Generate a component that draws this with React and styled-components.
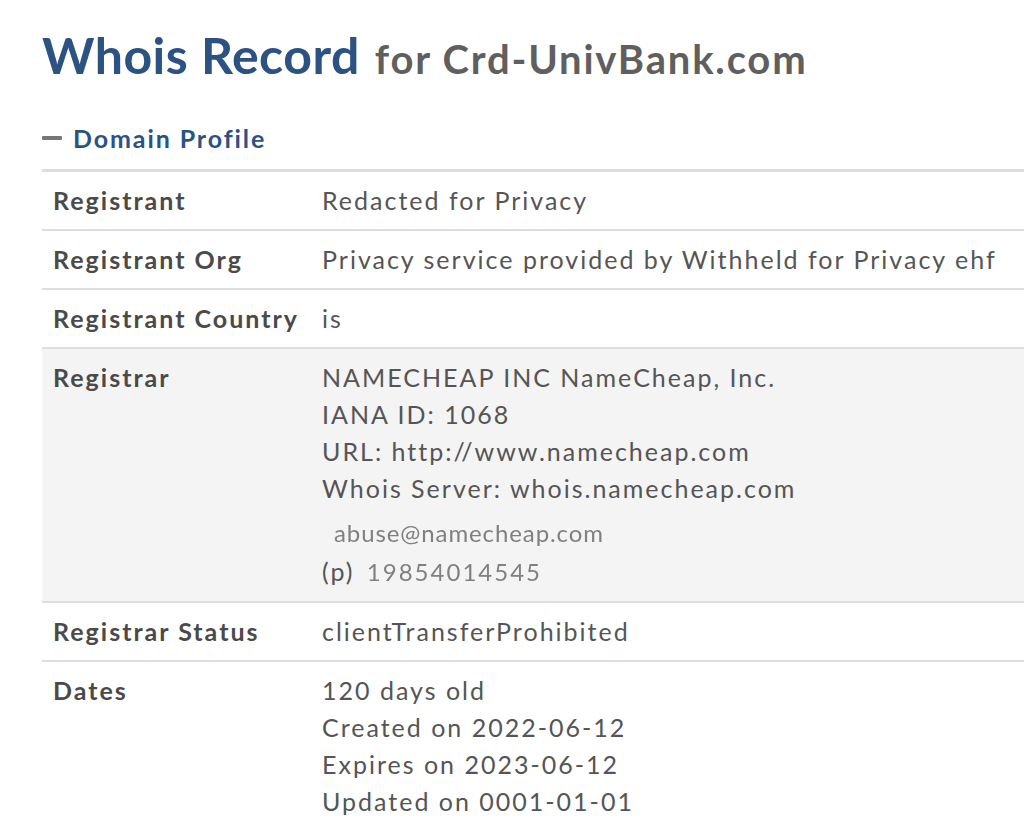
import styled, { createGlobalStyle } from 'styled-components'

const GlobalStyle = createGlobalStyle`
    body {
        margin: 0;
        background: #fff;
        font-family: Lato, "Open Sans", sans-serif;
    }
`

const Page = styled('div')`
    padding: 26px 0 0 42px;
    overflow: hidden;
`

const Title = styled('h1')`
    margin: 0;
    font-size: 50px;
    font-weight: 700;
    letter-spacing: 0.5px;
    color: #2c5283;
    line-height: 58px;
    white-space: nowrap;
    span {
        font-size: 40px;
        letter-spacing: 1.8px;
        color: #5f5f5f;
        margin-left: 15px;
    }
`

const SectionHead = styled('h2')`
    display: flex;
    align-items: center;
    gap: 11px;
    margin: 35px 0 0;
    font-size: 25px;
    font-weight: 700;
    letter-spacing: 1.9px;
    color: #2c5283;
    line-height: 30px;
`

const Minus = styled('span')`
    width: 20px;
    height: 4px;
    border-radius: 1px;
    background: #777;
`

const Table = styled('div')`
    margin-top: 16px;
    border-top: 3px solid #ddd;
    width: 1100px;
`

const Row = styled('div')`
    display: grid;
    grid-template-columns: 280px 1fr;
    background: ${(p) => (p.$shaded ? '#f4f4f4' : '#fff')};
    border-bottom: 2px solid #ddd;
    padding: 10px 0;
    font-size: 25px;
    line-height: 37px;
    letter-spacing: 2px;
`

const Label = styled('div')`
    padding-left: 11px;
    font-weight: 700;
    color: #4a4a4a;
`

const Value = styled('div')`
    color: #555;
`

const Contact = styled('div')`
    margin-top: 6px;
    line-height: 39px;
`

const Blurred = styled('span')`
    font-size: 24px;
    letter-spacing: ${(p) => p.$spacing || '0.9px'};
    color: #808080;
    filter: blur(0.3px);
    margin-left: ${(p) => p.$indent || '0'};
`

const rows = [
    { label: 'Registrant', lines: ['Redacted for Privacy'] },
    {
        label: 'Registrant Org',
        lines: ['Privacy service provided by Withheld for Privacy ehf'],
    },
    { label: 'Registrant Country', lines: ['is'] },
    {
        label: 'Registrar',
        shaded: true,
        lines: [
            'NAMECHEAP INC NameCheap, Inc.',
            'IANA ID: 1068',
            'URL: http://www.namecheap.com',
            'Whois Server: whois.namecheap.com',
        ],
        contact: true,
    },
    { label: 'Registrar Status', lines: ['clientTransferProhibited'] },
    {
        label: 'Dates',
        lines: [
            '120 days old',
            'Created on 2022-06-12',
            'Expires on 2023-06-12',
            'Updated on 0001-01-01',
        ],
    },
]

function App() {
    return (
        <Page>
            <GlobalStyle />
            <Title>
                Whois Record<span>for Crd-UnivBank.com</span>
            </Title>
            <SectionHead>
                <Minus />
                Domain Profile
            </SectionHead>
            <Table>
                {rows.map((row) => (
                    <Row key={row.label} $shaded={row.shaded}>
                        <Label>{row.label}</Label>
                        <Value>
                            {row.lines.map((line) => (
                                <div key={line}>{line}</div>
                            ))}
                            {row.contact && (
                                <Contact>
                                    <div>
                                        <Blurred $indent="12px">abuse@namecheap.com</Blurred>
                                    </div>
                                    <div>
                                        (p){' '}
                                        <Blurred $spacing="2px" $indent="4px">
                                            19854014545
                                        </Blurred>
                                    </div>
                                </Contact>
                            )}
                        </Value>
                    </Row>
                ))}
            </Table>
        </Page>
    )
}

export default App
